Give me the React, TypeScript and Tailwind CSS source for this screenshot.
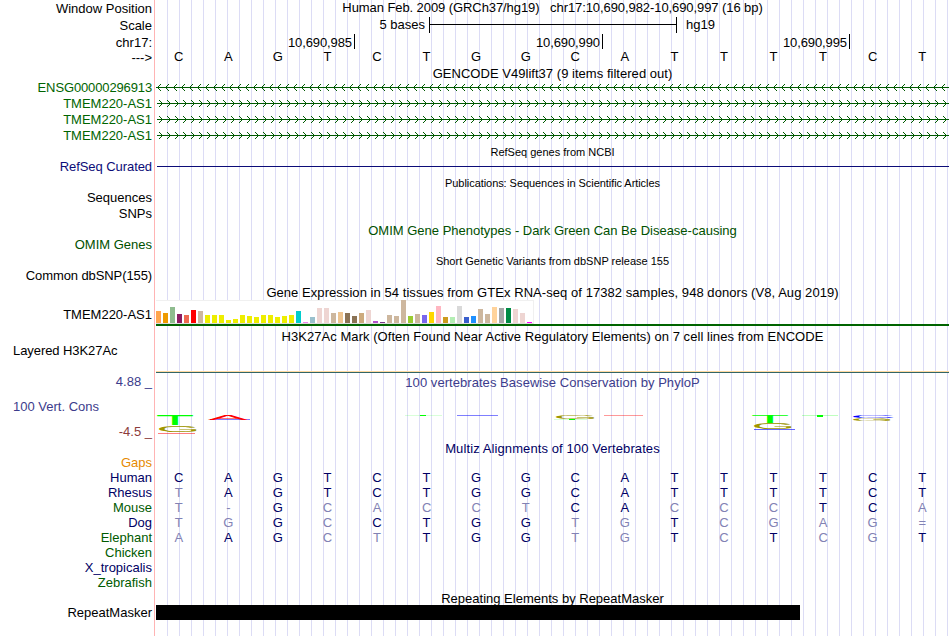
import React from 'react';
import { clsx } from 'clsx';

interface TrackLabel {
  text: string;
  className: string;
}

interface LogoLetterProps {
  letter: 'A' | 'C' | 'G' | 'T';
  x: number;
  y: number;
  w: number;
  h: number;
}

const labels: TrackLabel[] = [
  { text: 'Window Position', className: 'h-[17px]' },
  { text: 'Scale', className: 'h-[17px]' },
  { text: 'chr17:', className: 'h-[15px]' },
  { text: '--->', className: 'h-[30px]' },
  { text: 'ENSG00000296913', className: 'h-4 text-[#006400] tracking-[-0.13px]' },
  { text: 'TMEM220-AS1', className: 'h-4 text-[#006400]' },
  { text: 'TMEM220-AS1', className: 'h-4 text-[#006400]' },
  { text: 'TMEM220-AS1', className: 'h-[31px] text-[#006400]' },
  { text: 'RefSeq Curated', className: 'h-[31px] text-[#0c0c78] tracking-[-0.07px]' },
  { text: 'Sequences', className: 'h-4' },
  { text: 'SNPs', className: 'h-[31px]' },
  { text: 'OMIM Genes', className: 'h-[31px] text-[#005000]' },
  { text: 'Common dbSNP(155)', className: 'h-[39px] tracking-[-0.1px]' },
  { text: 'TMEM220-AS1', className: 'h-9' },
  { text: 'Layered H3K27Ac', className: 'h-[31px] pl-[13px] text-left tracking-[-0.07px]' },
  { text: '4.88 _', className: 'h-[25px] text-[#3c3c8c]' },
  { text: '100 Vert. Cons', className: 'h-[25px] pl-[13px] text-left text-[#3c3c8c]' },
  { text: '-4.5 _', className: 'h-[31px] text-[#8c3c3c]' },
  { text: 'Gaps', className: 'h-[15px] text-[#e68a00]' },
  { text: 'Human', className: 'h-[15px] text-[#000064]' },
  { text: 'Rhesus', className: 'h-[15px] text-[#000064]' },
  { text: 'Mouse', className: 'h-[15px] text-[#005a00]' },
  { text: 'Dog', className: 'h-[15px] text-[#000064]' },
  { text: 'Elephant', className: 'h-[15px] text-[#005a00]' },
  { text: 'Chicken', className: 'h-[15px] text-[#005a00]' },
  { text: 'X_tropicalis', className: 'h-[15px] text-[#000064]' },
  { text: 'Zebrafish', className: 'h-[30px] text-[#005a00]' },
  { text: 'RepeatMasker', className: 'h-8' },
];

const sequence = 'CAGTCTGGCATTTTCT';

// lower case marks a base that differs from human
const alignments = [
  'CAGTCTGGCATTTTCT',
  'tAGTCTGGCATTTTCT',
  't-GcacctCAcccTCa',
  'tgGcCTGGtgTcgag=',
  'aAGctTGGtgTcTcgT',
];

// one bar per tissue: [colour, height]
const tissues: [string, number][] = [
  ['#ffa54f', 12], ['#ee9a00', 10], ['#8fbc8f', 16], ['#8b1c62', 9], ['#ee6a50', 8], ['#ff0000', 13],
  ['#cdb79e', 12], ['#eeee00', 8], ['#eeee00', 8], ['#eeee00', 8], ['#eeee00', 3], ['#eeee00', 4],
  ['#eeee00', 8], ['#eeee00', 7], ['#eeee00', 6], ['#eeee00', 8], ['#eeee00', 8], ['#eeee00', 6],
  ['#eeee00', 7], ['#eeee00', 8], ['#00cdcd', 12], ['#ee82ee', 1], ['#9ac0cd', 6], ['#eed5d2', 15],
  ['#eed5d2', 15], ['#cdb79e', 10], ['#eec591', 11], ['#8b7355', 10], ['#8b7355', 7], ['#cdaa7d', 10],
  ['#eed5d2', 13], ['#b452cd', 2], ['#7a378b', 1], ['#cdb79e', 8], ['#cdb79e', 7], ['#cdb79e', 23],
  ['#9acd32', 7], ['#cdb79e', 9], ['#7a67ee', 8], ['#ffd700', 11], ['#ffb6c1', 17], ['#cd9b1d', 6],
  ['#b4eeb4', 6], ['#d9d9d9', 17], ['#3a5fcd', 6], ['#1e90ff', 7], ['#cdb79e', 14], ['#cdb79e', 9],
  ['#ffd39b', 16], ['#a6a6a6', 15], ['#008b45', 15], ['#eed5d2', 14], ['#eed5d2', 10], ['#ff00ff', 1],
];

// ink box of each letter at font size 100
const letterBox = {
  A: { left: 0.5, width: 66, height: 69, color: '#ff0000' },
  C: { left: 5, width: 64, height: 70, color: '#0000ff' },
  G: { left: 5, width: 67, height: 70, color: '#a09600' },
  T: { left: 2.1, width: 57, height: 69, color: '#00ff00' },
};

const logo: LogoLetterProps[] = [
  { letter: 'T', x: 1, y: 27, w: 36, h: 10 },
  { letter: 'G', x: 3, y: 37, w: 38, h: 7 },
  { letter: 'A', x: 52, y: 27, w: 40, h: 4.5 },
  { letter: 'G', x: 400, y: 27, w: 39, h: 4 },
  { letter: 'T', x: 596, y: 27, w: 36, h: 8 },
  { letter: 'G', x: 598, y: 35, w: 38, h: 6 },
  { letter: 'C', x: 697, y: 27, w: 41, h: 3 },
  { letter: 'G', x: 697, y: 30, w: 38, h: 3 },
];

// scores close to zero leave only a strip: [x, y, width, height, colour, opacity]
const strips: [number, number, number, number, string, number][] = [
  [2, 45, 37, 1, '#ff0000', 0.5],
  [54, 31, 40, 1, '#0000ff', 0.5],
  [249, 27, 37, 1, '#00ff00', 0.15],
  [264, 27, 6, 1, '#00ff00', 1],
  [301, 27, 41, 1, '#0000ff', 0.5],
  [398, 31, 33, 1, '#00ff00', 0.15],
  [413, 31, 6, 1, '#00ff00', 1],
  [448, 27, 39, 1, '#ff0000', 0.4],
  [598, 41, 41, 1, '#0000ff', 0.6],
  [646, 27, 36, 1, '#00ff00', 0.25],
  [661, 27, 6, 2, '#00ff00', 1],
];

const Title: React.FC<{ className?: string; children: React.ReactNode }> = ({ className, children }) => (
  <div className={clsx('h-[15px] text-center leading-5 whitespace-pre', className)}>{children}</div>
);

const SmallTitle: React.FC<{ className?: string; children: React.ReactNode }> = ({ className, children }) => (
  <div className={clsx('h-[15px] text-center text-[11px] leading-[18px] whitespace-pre', className)}>{children}</div>
);

const BaseRow: React.FC<{ bases: string; className?: string }> = ({ bases, className }) => (
  <div className={clsx('grid h-[15px] grid-cols-16 text-center', className)}>
    {bases.split('').map((base, i) => (
      <span key={i} className={clsx('pr-1', /[a-z=-]/.test(base) && 'text-[#8282b4]')}>
        {base.toUpperCase()}
      </span>
    ))}
  </div>
);

const GeneRow: React.FC<{ strand: '+' | '-' }> = ({ strand }) => {
  const start = strand === '-' ? 0 : 1;
  const chevrons = Array.from({ length: 99 }, (_, i) =>
    strand === '-' ? `M${i * 8 + 5} 5l-3.5 3.5l3.5 3.5` : `M${i * 8 + 3} 5l3.5 3.5l-3.5 3.5`
  ).join('');

  return (
    <svg className="block h-4 w-[793px]" viewBox="0 0 793 16">
      <rect x={start} y="8" width={793 - start} height="1" fill="#005a00" />
      <path d={chevrons} fill="none" stroke="#005a00" strokeWidth="1" />
    </svg>
  );
};

const LogoLetter: React.FC<LogoLetterProps> = ({ letter, x, y, w, h }) => {
  const box = letterBox[letter];
  const sx = w / box.width;
  const sy = h / box.height;

  return (
    <text
      transform={`translate(${x - box.left * sx} ${y + h}) scale(${sx} ${sy})`}
      fontSize="100"
      fill={box.color}
    >
      {letter}
    </text>
  );
};

const App: React.FC = () => {
  return (
    <div className="flex h-[636px] w-[950px] overflow-hidden bg-white font-['Liberation_Sans',Arial,sans-serif] text-[13px] text-black">
      <div className="w-[154px] shrink-0 text-right leading-[18px]">
        {labels.map((label, i) => (
          <div key={i} className={clsx('pr-0.5 whitespace-pre', label.className)}>
            {label.text}
          </div>
        ))}
      </div>
      <div className="mr-px w-px shrink-0 bg-[#ffb4b4]" />

      <div className="w-[793px] shrink-0 bg-[linear-gradient(to_right,transparent_11px,#dcdcf5_11px)] bg-[length:12px_100%]">
        <div className="h-[17px] text-center leading-[15px] tracking-[-0.08px] whitespace-pre">
          Human Feb. 2009 (GRCh37/hg19)   chr17:10,690,982-10,690,997 (16 bp)
        </div>
        <div className="flex h-[17px] leading-4">
          <span className="w-[269px] text-right">5 bases</span>
          <div className="ml-1 h-4 w-[248px] border-x border-black pt-[7px]">
            <div className="h-px bg-black" />
          </div>
          <span className="ml-[9px]">hg19</span>
        </div>
        <div className="flex h-[15px] text-right leading-[18px] tracking-[-0.1px]">
          <span className="w-[199px] border-r border-black pr-0.5">10,690,985</span>
          <span className="w-[248px] border-r border-black pr-0.5">10,690,990</span>
          <span className="w-[247px] border-r border-black pr-0.5">10,690,995</span>
        </div>
        <BaseRow bases={sequence} className="leading-4" />

        <Title className="tracking-[0.03px]">GENCODE V49lift37 (9 items filtered out)</Title>
        <GeneRow strand="-" />
        <GeneRow strand="+" />
        <GeneRow strand="+" />
        <GeneRow strand="+" />

        <SmallTitle>RefSeq genes from NCBI</SmallTitle>
        <div className="h-4 pt-2 pl-px">
          <div className="h-px bg-[#0c0c78]" />
        </div>

        <SmallTitle className="tracking-[-0.06px]">Publications: Sequences in Scientific Articles</SmallTitle>
        <div className="h-8" />

        <Title className="text-[#005000]">OMIM Gene Phenotypes - Dark Green Can Be Disease-causing</Title>
        <div className="h-4" />

        <SmallTitle>Short Genetic Variants from dbSNP release 155</SmallTitle>
        <div className="h-4" />

        <Title className="tracking-[0.055px]">
          Gene Expression in 54 tissues from GTEx RNA-seq of 17382 samples, 948 donors (V8, Aug 2019)
        </Title>
        <div className="mt-0.5 flex h-6 w-[378px] items-end gap-0.5 border-r border-b border-r-[#f0f0f0] border-b-[#dcdcdc] bg-white shadow-[inset_0_1px_#f0f0f0]">
          {tissues.map(([color, height], i) => (
            <div key={i} className="w-[5px] shrink-0" style={{ backgroundColor: color, height }} />
          ))}
        </div>
        <div className="h-0.5 bg-[#006400]" />

        <Title className="mt-px tracking-[0.05px]">
          H3K27Ac Mark (Often Found Near Active Regulatory Elements) on 7 cell lines from ENCODE
        </Title>
        <div className="mt-[29px] h-px bg-[#ffd9a0]" />
        <div className="h-px bg-[#336666]" />

        <Title className="tracking-[0.05px] text-[#3c3c8c]">100 vertebrates Basewise Conservation by PhyloP</Title>
        <svg className="block h-[51px] w-[793px]" viewBox="0 0 793 51">
          {strips.map(([x, y, width, height, color, opacity], i) => (
            <rect key={i} x={x} y={y} width={width} height={height} fill={color} opacity={opacity} />
          ))}
          {logo.map((item, i) => (
            <LogoLetter key={i} {...item} />
          ))}
        </svg>

        <Title className="tracking-[0.1px] text-[#000064]">Multiz Alignments of 100 Vertebrates</Title>
        <div className="mt-[15px] mb-[45px] text-[#000064]">
          {alignments.map((bases, i) => (
            <BaseRow key={i} bases={bases} className="leading-[18px]" />
          ))}
        </div>

        <Title>Repeating Elements by RepeatMasker</Title>
        <div className="mt-px h-[15px] w-[644px] bg-black" />
        <div className="h-4" />
      </div>
    </div>
  );
};

export default App;
